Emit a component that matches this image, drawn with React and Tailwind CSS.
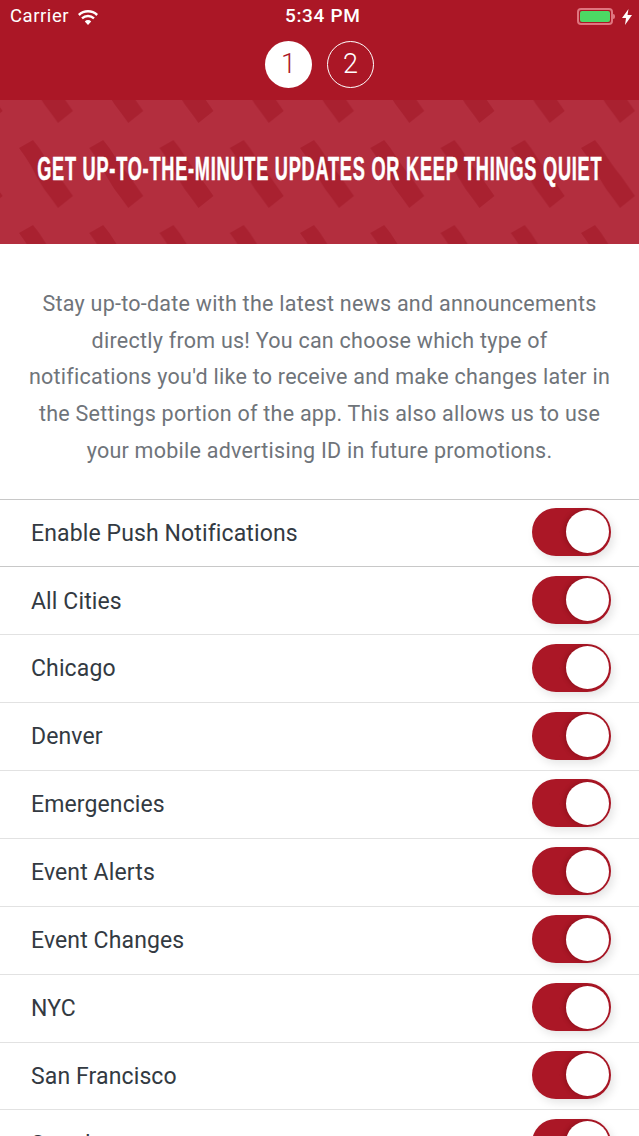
const rows = [
  "All Cities",
  "Chicago",
  "Denver",
  "Emergencies",
  "Event Alerts",
  "Event Changes",
  "NYC",
  "San Francisco",
  "Seattle",
];

function Toggle() {
  return (
    <div className="-mt-[2px] flex h-[48px] w-[78.5px] justify-end rounded-full bg-[#ab1726] p-[2.5px] pr-[2px] shadow-[3px_4px_8px_rgba(0,0,0,0.1)]">
      <div className="h-[43px] w-[43px] rounded-full bg-white shadow-[-2px_0_4px_rgba(90,0,10,0.3)]" />
    </div>
  );
}

function Row({ label, strong }) {
  return (
    <div
      className={`flex h-[67.875px] shrink-0 items-center justify-between border-b pl-[31px] pr-[28.5px] ${
        strong ? "border-[#c8c8c8]" : "border-[#e2e2e2]"
      }`}
    >
      <span className="translate-y-px text-[23px] tracking-[0.12px] text-[#333a42]">{label}</span>
      <Toggle />
    </div>
  );
}

function Pattern() {
  return (
    <svg className="absolute inset-0 h-full w-full" aria-hidden="true">
      <defs>
        <pattern id="bacon" width="70.25" height="85" patternUnits="userSpaceOnUse" x="19" y="40">
          <path d="M0 8 L14 0 Q20 7 26 17 Q34 29 40 36 Q47 46 54 56 L39 68 Q32 58 25 49 Q17 37 12 26 Q6 16 0 8Z" fill="#a71f2e" opacity="0.85" />
        </pattern>
      </defs>
      <rect width="100%" height="100%" fill="url(#bacon)" />
    </svg>
  );
}

export default function App() {
  return (
    <div className="flex h-[1136px] w-[639px] flex-col overflow-hidden bg-white font-['Roboto',sans-serif]">
      <div className="h-[100px] shrink-0 bg-[#ab1726] text-white">
        <div className="relative flex h-[33px] items-center justify-between pl-[10px] pr-[7px]">
          <div className="flex items-center gap-[8px] text-[18.5px] tracking-[0.55px]">
            <span>Carrier</span>
            <svg width="22" height="16" viewBox="0 0 22 16" fill="white">
              <path d="M11 16l-3.2-3.6a4.6 4.6 0 0 1 6.4 0z" />
              <path d="M5.8 10.2a7.6 7.6 0 0 1 10.4 0l1.6-1.8a10 10 0 0 0-13.6 0z" />
              <path d="M2.7 6.9a12 12 0 0 1 16.6 0l1.7-1.9a14.6 14.6 0 0 0-20 0z" />
            </svg>
          </div>
          <span className="absolute left-[285px] text-[19px] font-medium tracking-[0.65px]">5:34 PM</span>
          <div className="flex items-center gap-[7px]">
            <div className="flex items-center">
              <div className="h-[17px] w-[36px] rounded-[4px] border-2 border-[#df7680] p-[1px]">
                <div className="h-full w-full rounded-[2px] bg-[#4cd964]" />
              </div>
              <div className="h-[5px] w-[2px] rounded-r-sm bg-[#df7680]" />
            </div>
            <svg width="10" height="16" viewBox="0 0 10 16" fill="white">
              <path d="M6.5 0L0 9h4l-1 7 7-10H5.5z" />
            </svg>
          </div>
        </div>
        <div className="mt-[8px] flex justify-center gap-[15px]">
          <div className="flex h-[47px] w-[47px] items-center justify-center rounded-full bg-white text-[27px] font-light text-[#ab1726]">
            1
          </div>
          <div className="flex h-[47px] w-[47px] items-center justify-center rounded-full border border-white text-[27px] font-light text-white">
            2
          </div>
        </div>
      </div>

      <div className="relative flex h-[144px] shrink-0 items-center justify-center overflow-hidden bg-[#b32e3e] pb-[7px]">
        <Pattern />
        <h1 className="relative origin-center scale-x-[0.55] whitespace-nowrap font-['Liberation_Sans',sans-serif] text-[33px] font-bold tracking-[1.4px] text-white [-webkit-text-stroke:0.5px_white]">
          GET UP-TO-THE-MINUTE UPDATES OR KEEP THINGS QUIET
        </h1>
      </div>

      <p className="shrink-0 border-b border-[#c8c8c8] px-[20px] pb-[29px] pt-[42px] text-center text-[21.5px] leading-[36.7px] tracking-[0.25px] text-[#6f747a]">
        Stay up-to-date with the latest news and announcements
        <br />
        directly from us! You can choose which type of
        <br />
        notifications you'd like to receive and make changes later in
        <br />
        the Settings portion of the app. This also allows us to use
        <br />
        your mobile advertising ID in future promotions.
      </p>

      <Row label="Enable Push Notifications" strong />
      {rows.map((r) => (
        <Row key={r} label={r} />
      ))}
    </div>
  );
}
